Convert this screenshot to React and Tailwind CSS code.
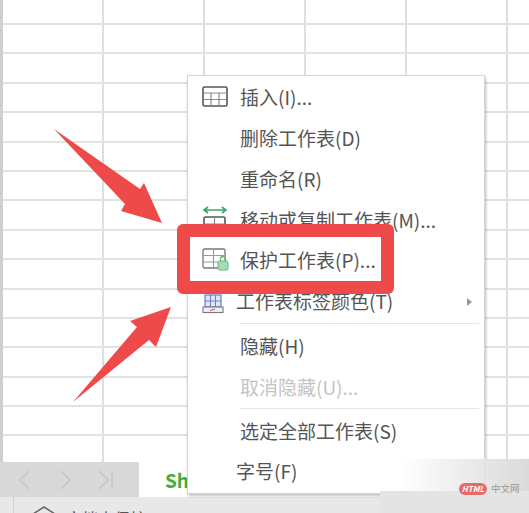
const ROWS = Array.from({ length: 16 });
const COLS = Array.from({ length: 6 });

const TableIcon = () => (
  <svg width="26" height="22" viewBox="0 0 26 22" fill="none">
    <rect x="1" y="1" width="24" height="19" rx="1.5" fill="#fff" stroke="#555" strokeWidth="1.6" />
    <path d="M1 7h24M1 13.5h24M9 7v13M17 7v13" stroke="#8a8a8a" strokeWidth="1.2" />
  </svg>
);

const MoveIcon = () => (
  <svg width="26" height="32" viewBox="0 0 26 32" fill="none">
    <path d="M2 4h22M6 1L2 4l4 3M20 1l4 3-4 3" stroke="#3aa769" strokeWidth="1.6" />
    <rect x="2" y="11" width="21" height="19" rx="1.5" stroke="#555" strokeWidth="1.6" />
    <path d="M2 18h21M12.5 11v19" stroke="#8a8a8a" strokeWidth="1.2" />
  </svg>
);

const LockIcon = () => (
  <svg width="27" height="24" viewBox="0 0 27 24" fill="none">
    <rect x="1" y="1" width="22" height="19" rx="1.5" stroke="#777" strokeWidth="1.3" />
    <path d="M1 7.5h22M1 14h15M11.5 1v19" stroke="#999" strokeWidth="1.1" />
    <rect x="16" y="13" width="10" height="9" rx="1.5" fill="#a5dcb6" stroke="#5cb87c" />
    <path d="M18.5 13v-2a2.5 2.5 0 0 1 5 0v2" stroke="#5cb87c" strokeWidth="1.3" />
  </svg>
);

const TabColorIcon = () => (
  <svg width="22" height="20" viewBox="0 0 22 20" fill="none">
    <rect x="3" y="1" width="16" height="12" fill="#dfe6f7" stroke="#6d7fc4" strokeWidth="1.2" />
    <path d="M3 7h16M8.5 1v12M13.5 1v12" stroke="#6d7fc4" strokeWidth="1" />
    <rect x="1" y="13" width="20" height="5.5" fill="#eef0f6" stroke="#777" strokeWidth="1.1" />
    <path d="M8 16.5l5-1.5" stroke="#e05a5a" strokeWidth="1.2" />
  </svg>
);

const items = [
  { label: "插入(I)...", h: "h-[43px]", icon: <TableIcon />, iconCls: "left-[14px] top-[10px]" },
  { label: "删除工作表(D)", h: "h-[38px]" },
  { label: "重命名(R)", h: "h-[44px]" },
  { label: "移动或复制工作表(M)...", h: "h-[38px]", icon: <MoveIcon />, iconCls: "left-[14px] top-[5px]" },
  { label: "保护工作表(P)...", h: "h-[42px]", icon: <LockIcon />, iconCls: "left-[14px] top-[9px]" },
  { label: "工作表标签颜色(T)", h: "h-[43px] pb-[2px]", pad: "pl-[48px]", icon: <TabColorIcon />, iconCls: "left-[14px] top-[13px]", arrow: true, line: true },
  { label: "隐藏(H)", h: "h-[44px]" },
  { label: "取消隐藏(U)...", h: "h-[41px] pb-[2px]", color: "text-[#c4c4c4]", line: true },
  { label: "选定全部工作表(S)", h: "h-[44px]" },
  { label: "字号(F)", h: "h-[40px] pb-[4px]", pad: "pl-[48px]" },
];

export default function App() {
  return (
    <div className="relative flex h-[513px] w-[529px] flex-col overflow-hidden bg-white font-['Noto_Sans_CJK_SC','Noto_Sans',sans-serif]">
      {/* sheet grid */}
      <div className="h-[462px] overflow-hidden border-l-[3px] border-[#cfcfcf]">
        {ROWS.map((_, r) => (
          <div key={r} className={`flex border-b-2 border-[#e2e2e2] ${r === 0 ? "h-[25px]" : "h-[29.4px]"}`}>
            {COLS.map((_, c) => (
              <div key={c} className="h-full w-[101px] shrink-0 border-r-2 border-[#dedede]" />
            ))}
          </div>
        ))}
      </div>

      {/* sheet tabs */}
      <div className="flex h-[35px] bg-white">
        <div className="flex w-[139px] items-center bg-[#d8d8d8] pl-[19px]">
          <svg width="96" height="22" viewBox="0 0 96 22" fill="none" stroke="#c6c6c6" strokeWidth="1.5">
            <path d="M10 2L1 11l9 9M42 2l9 9-9 9M80 2l9 9-9 9M93 2v18" />
          </svg>
        </div>
        <div className="w-[110px] pl-[26px] pt-[5px] text-[19px] font-bold leading-[26px] text-[#3fae3f]">Sheet1</div>
      </div>

      {/* status bar */}
      <div className="flex h-[16px] items-start bg-[#e8e8e8] pl-[13px]">
        <div className="h-full border-l border-[#d2d2d2] pl-[18px] pt-[9px]">
          <svg width="24" height="14" viewBox="0 0 24 14" fill="none" stroke="#666" strokeWidth="1.5">
            <path d="M1 8l11-7 11 7M5 8v6M19 8v6" />
          </svg>
        </div>
        <span className="ml-[10px] mt-[11px] text-[16px] leading-[20px] text-[#555]">文档未保护</span>
      </div>

      {/* context menu */}
      <div className="absolute left-[187px] top-[75px] flex w-[298px] flex-col border border-[#d4d4d4] bg-white shadow-[1px_2px_3px_rgba(0,0,0,0.25)]">
        {items.map((it) => (
          <div key={it.label} className="relative">
            <div className={`flex items-center ${it.h} ${it.pad || "pl-[52px]"} text-[19px] ${it.color || "text-[#555]"}`}>
              {it.label}
            </div>
            {it.icon && <div className={`absolute ${it.iconCls}`}>{it.icon}</div>}
            {it.arrow && (
              <div className="absolute right-[12px] top-[17px] h-0 w-0 border-y-[4px] border-l-[5px] border-y-transparent border-l-[#9a9a9a]" />
            )}
            {it.line && <div className="absolute bottom-0 left-[52px] right-[5px] h-px bg-[#e6e6e6]" />}
          </div>
        ))}
      </div>

      {/* red highlight box */}
      <div className="absolute left-[177px] top-[224px] h-[70px] w-[217px] rounded-[6px] border-[13px] border-[#ee4a4a]" />

      {/* red arrows */}
      <svg className="absolute left-0 top-0" width="529" height="513" viewBox="0 0 529 513">
        <polygon points="54,129 140,189 144,183 162,223 121,211 125,204" fill="#ee4a4a" />
        <polygon points="73,402 137,327 130,321 171,307 156,347 149,340" fill="#ee4a4a" />
      </svg>

      {/* watermark */}
      <div className="absolute left-[400px] top-[459px] h-[40px] w-[129px] bg-gradient-to-r from-transparent via-[#e6e6e6] via-60% to-[#d6d6d6] opacity-90" />
      <div className="absolute left-[380px] top-[491px] h-[22px] w-[149px] bg-[#e4e4e4]" />
      <div className="absolute left-[459px] top-[483px] flex items-center gap-[4px]">
        <span className="flex h-[12px] w-[28px] items-center justify-center rounded-full bg-[#e66a6a] text-[8px] font-bold italic leading-none text-white">HTML</span>
        <span className="text-[9.5px] leading-none text-[#999]">中文网</span>
      </div>
    </div>
  );
}
